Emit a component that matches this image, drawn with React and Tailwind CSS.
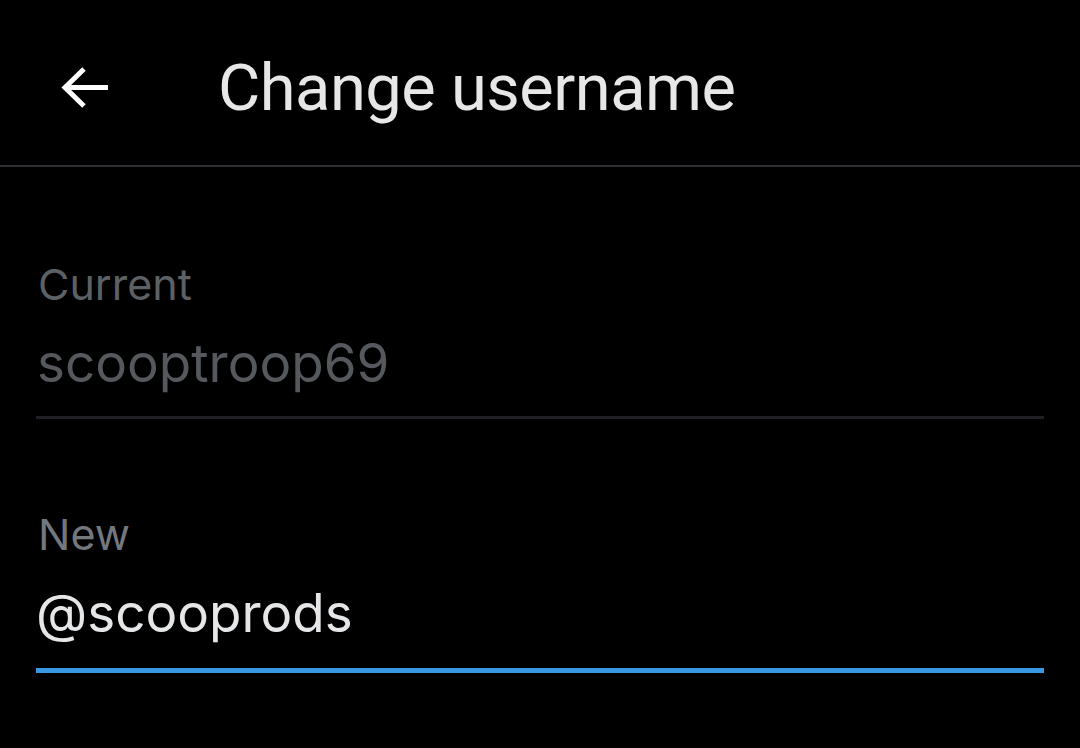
export default function App() {
  return (
    <div className="w-[1080px] h-[748px] bg-black overflow-hidden" style={{ fontFamily: 'Roboto, "Noto Sans", sans-serif' }}>
      <header className="h-[167px] border-b-2 border-[#2f3033] flex items-center">
        <div className="w-[218px] flex items-center pl-[60px] mt-[12px]">
          <svg width="50" height="44" viewBox="0 0 50 44" fill="none" stroke="#ffffff" strokeWidth="5" strokeLinecap="butt" strokeLinejoin="miter">
            <path d="M48 20.5H5" />
            <path d="M24 2L5 20.5L24 39" />
          </svg>
        </div>
        <h1 className="text-[65px] leading-none text-[#e7e7e7] mt-[12px] tracking-[-0.5px]">Change username</h1>
      </header>
      <main className="px-[36px]" style={{ fontFamily: 'Inter, Roboto, sans-serif' }}>
        <div className="pt-[96px] border-b-[3px] border-[#1f2023] pb-[26px]">
          <div className="pl-[2px] text-[43px] leading-none text-[#5c6166]">Current</div>
          <div className="pl-[1px] mt-[31px] text-[53px] leading-none text-[#55595e]">scooptroop69</div>
        </div>
        <div className="pt-[94px] border-b-[5px] border-[#3a97e4] pb-[28px]">
          <div className="pl-[2px] text-[43px] leading-none text-[#73787e]">New</div>
          <div className="mt-[31px] text-[53px] leading-none text-[#e4e6e8]">@scooprods</div>
        </div>
      </main>
    </div>
  );
}
